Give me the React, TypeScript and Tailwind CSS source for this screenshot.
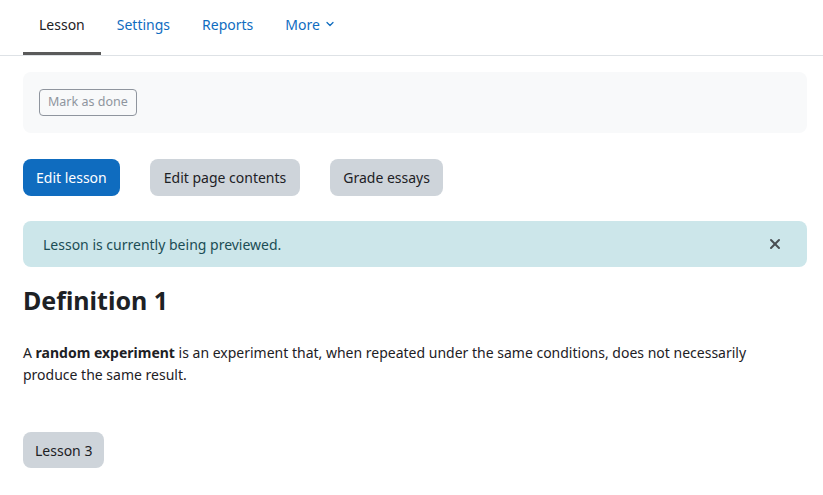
import { X, ChevronDown } from 'lucide-react';

function Tab({ label, active }: { label: string; active?: boolean }) {
  return (
    <a
      className={
        active
          ? 'px-4 h-[55px] flex items-center pb-1 border-b-[3px] border-[#5a5a5a] text-[#1d2125]'
          : 'px-4 h-[55px] flex items-center pb-1 border-b-[3px] border-transparent text-[#0f6cbf]'
      }
    >
      {label}
    </a>
  );
}

export default function App() {
  return (
    <div className="bg-white text-[#1d2125] text-[14px] min-h-[495px]" style={{ fontFamily: '"Noto Sans", "Open Sans", sans-serif' }}>
      {/* tabs */}
      <nav className="flex pl-[23px] border-b border-[#dee2e6] h-[56px]">
        <Tab label="Lesson" active />
        <Tab label="Settings" />
        <Tab label="Reports" />
        <a className="px-4 h-[55px] flex items-center gap-1 pb-1 border-b-[3px] border-transparent text-[#0f6cbf]">
          More
          <ChevronDown size={12} strokeWidth={2.5} />
        </a>
      </nav>

      <div className="pl-[23px] pr-4">
        {/* activity header */}
        <div className="mt-4 bg-[#f8f9fa] rounded-lg px-4 py-[17px]">
          <button className="border border-[#8f959e] rounded text-[#8f959e] text-[12.5px] px-2 h-[27px] leading-none">
            Mark as done
          </button>
        </div>

        {/* action buttons */}
        <div className="flex gap-[30px] mt-[26px]">
          <button className="bg-[#0f6cbf] text-white rounded-lg px-[13px] h-[37px]">Edit lesson</button>
          <button className="bg-[#ced4da] text-[#1d2125] rounded-lg px-[14px] h-[37px]">Edit page contents</button>
          <button className="bg-[#ced4da] text-[#1d2125] rounded-lg px-[13px] h-[37px]">Grade essays</button>
        </div>

        {/* alert */}
        <div className="mt-[25px] bg-[#cce6ea] text-[#1b4d55] rounded-lg h-[46px] flex items-center justify-between pl-5 pr-6">
          <span>Lesson is currently being previewed.</span>
          <X size={16} strokeWidth={3} className="text-[#4a4f53]" />
        </div>

        <h2 className="mt-[18px] text-[25px] font-bold leading-[1.2]">Definition 1</h2>

        <p className="mt-[27px] leading-[22px] max-w-[740px]">
          A <strong>random experiment</strong> is an experiment that, when repeated under the same conditions, does not
          necessarily produce the same result.
        </p>

        <button className="mt-[46px] bg-[#ced4da] rounded-lg px-3 h-[36px]">Lesson 3</button>
      </div>
    </div>
  );
}
